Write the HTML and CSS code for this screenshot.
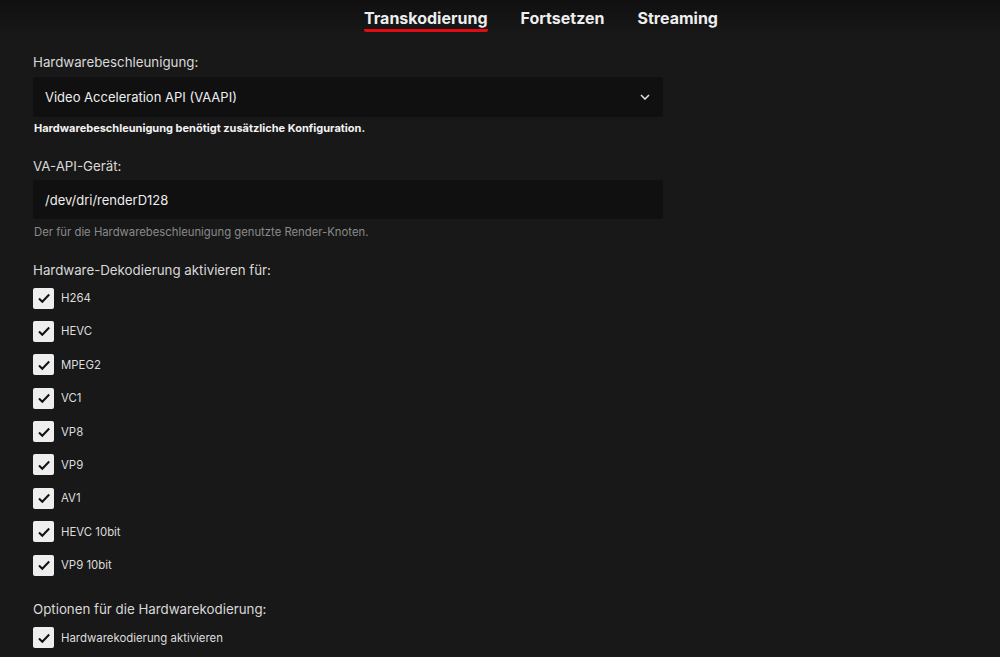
FILE: index.html
```html
<!DOCTYPE html>
<html lang="de">
<head>
<meta charset="utf-8">
<link rel="stylesheet" href="styles.css">
</head>
<body>
<nav class="tabs">
  <a class="tab active">Transkodierung</a>
  <a class="tab">Fortsetzen</a>
  <a class="tab">Streaming</a>
</nav>
<main class="form">
  <section class="field">
    <label class="label">Hardwarebeschleunigung:</label>
    <div class="select">
      <span>Video Acceleration API (VAAPI)</span>
      <svg class="chev" width="10" height="6" viewBox="0 0 10 6"><path d="M1 1l4 4 4-4" fill="none" stroke="#ddd" stroke-width="1.6"/></svg>
    </div>
    <p class="warn">Hardwarebeschleunigung benötigt zusätzliche Konfiguration.</p>
  </section>
  <section class="field">
    <label class="label label-tight">VA-API-Gerät:</label>
    <div class="input">/dev/dri/renderD128</div>
    <p class="hint">Der für die Hardwarebeschleunigung genutzte Render-Knoten.</p>
  </section>
  <section class="field field-last">
    <label class="label label-checks">Hardware-Dekodierung aktivieren für:</label>
    <ul class="checks">
      <li class="check"><span class="box"><svg viewBox="0 0 20 20"><path d="M5 10.5l3.3 3.3L15.2 6.5"/></svg></span>H264</li>
      <li class="check"><span class="box"><svg viewBox="0 0 20 20"><path d="M5 10.5l3.3 3.3L15.2 6.5"/></svg></span>HEVC</li>
      <li class="check"><span class="box"><svg viewBox="0 0 20 20"><path d="M5 10.5l3.3 3.3L15.2 6.5"/></svg></span>MPEG2</li>
      <li class="check"><span class="box"><svg viewBox="0 0 20 20"><path d="M5 10.5l3.3 3.3L15.2 6.5"/></svg></span>VC1</li>
      <li class="check"><span class="box"><svg viewBox="0 0 20 20"><path d="M5 10.5l3.3 3.3L15.2 6.5"/></svg></span>VP8</li>
      <li class="check"><span class="box"><svg viewBox="0 0 20 20"><path d="M5 10.5l3.3 3.3L15.2 6.5"/></svg></span>VP9</li>
      <li class="check"><span class="box"><svg viewBox="0 0 20 20"><path d="M5 10.5l3.3 3.3L15.2 6.5"/></svg></span>AV1</li>
      <li class="check"><span class="box"><svg viewBox="0 0 20 20"><path d="M5 10.5l3.3 3.3L15.2 6.5"/></svg></span>HEVC 10bit</li>
      <li class="check"><span class="box"><svg viewBox="0 0 20 20"><path d="M5 10.5l3.3 3.3L15.2 6.5"/></svg></span>VP9 10bit</li>
    </ul>
  </section>
  <section class="field">
    <label class="label label-checks2">Optionen für die Hardwarekodierung:</label>
    <ul class="checks">
      <li class="check"><span class="box"><svg viewBox="0 0 20 20"><path d="M5 10.5l3.3 3.3L15.2 6.5"/></svg></span>Hardwarekodierung aktivieren</li>
    </ul>
  </section>
</main>
</body>
</html>
```
FILE: styles.css
```css
html, body {
  margin: 0;
  padding: 0;
  background: #181818;
  color: #ddd;
  font-family: Inter, "Noto Sans", sans-serif;
  height: 657px;
  overflow: hidden;
}
.tabs {
  display: flex;
  justify-content: center;
  gap: 33px;
  padding-top: 9px;
  padding-left: 82px;
  height: 36px;
  box-sizing: border-box;
  background: linear-gradient(#101010, #181818);
}
.tab {
  font-size: 16px;
  font-weight: 700;
  color: #eee;
  height: 23px;
  line-height: 19px;
}
.tab.active {
  border-bottom: 3px solid #e50914;
  border-radius: 2px;
  box-sizing: border-box;
}
.form {
  padding: 17px 33px 0;
  width: 630px;
}
.field { margin-bottom: 22px; }
.field-last { margin-bottom: 24px; }
.label {
  display: block;
  font-size: 13.3px;
  color: #d8d8d8;
  line-height: 18px;
  margin-bottom: 6px;
}
.label-tight { margin-bottom: 5px; }
.label-checks { margin-bottom: 8.5px; }
.label-checks2 { margin-bottom: 9.5px; }
.select, .input {
  background: #101010;
  height: 40px;
  display: flex;
  align-items: center;
  padding: 0 12px;
  font-size: 13px;
  color: #eee;
  border-radius: 2px;
}
.input { height: 39px; }
.select { justify-content: space-between; }
.chev { margin-right: 1px; }
.warn {
  margin: 4px 0 0 1px;
  font-size: 11px;
  font-weight: 700;
  color: #f2f2f2;
  line-height: 14px;
}
.hint {
  margin: 6px 0 0 1px;
  font-size: 11.3px;
  color: #8a8a8a;
  line-height: 14px;
}
.checks {
  list-style: none;
  margin: 0;
  padding: 0;
  display: flex;
  flex-direction: column;
  gap: 12.375px;
}
.check {
  display: flex;
  align-items: center;
  gap: 7px;
  font-size: 11.4px;
  color: #ddd;
  height: 21px;
}
.box {
  width: 21px;
  height: 21px;
  border-radius: 2px;
  background: #eee;
  display: flex;
  align-items: center;
  justify-content: center;
}
.box svg {
  width: 20px;
  height: 20px;
}
.box path {
  fill: none;
  stroke: #111;
  stroke-width: 2;
}
```
